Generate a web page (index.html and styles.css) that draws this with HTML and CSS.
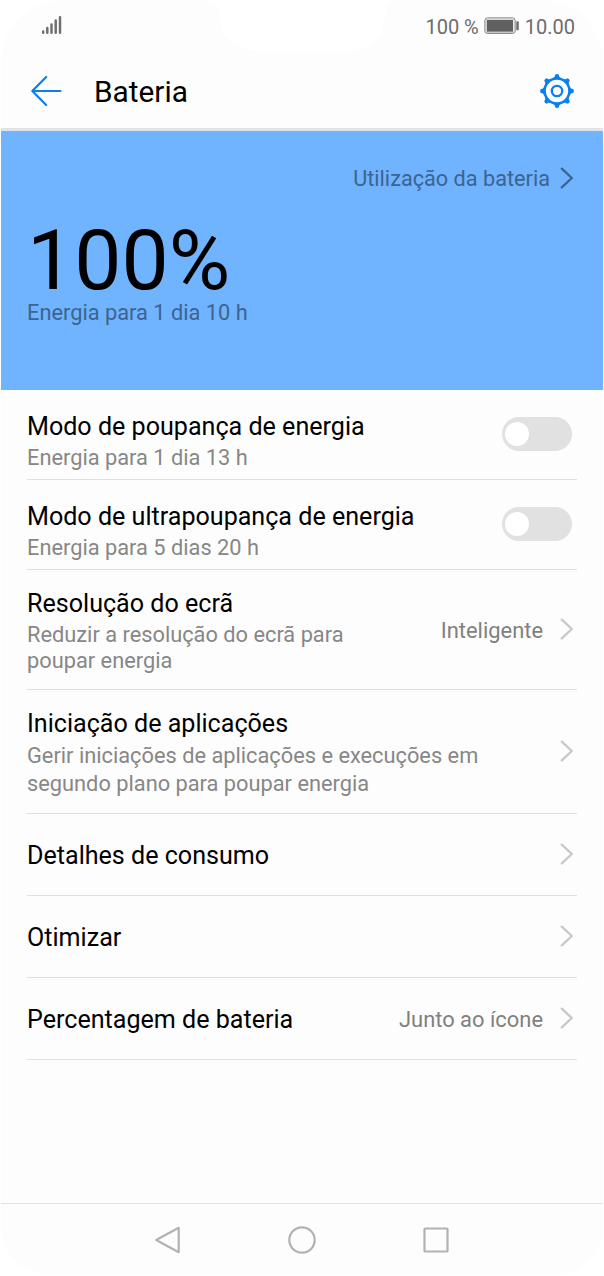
FILE: index.html
```html
<!DOCTYPE html>
<html lang="pt">
<head>
<meta charset="utf-8">
<title>Bateria</title>
<link rel="stylesheet" href="styles.css">
</head>
<body>
<svg class="defs" width="0" height="0" aria-hidden="true">
  <symbol id="chevron" viewBox="0 0 14 22"><path d="M1.800 1.600 11.800 11 1.800 20.400" fill="none" stroke="currentColor" stroke-width="2.300" stroke-linecap="round" stroke-linejoin="round"/></symbol>
</svg>
<div class="screen">
  <svg class="notch" width="200" height="52" viewBox="0 0 200 52"><path d="M0 0C13 1 16 6 17 15C18 36 32 50.500 54 50.500H146C168 50.500 182 36 183 15C184 6 187 1 200 0Z" fill="#fff"/></svg>
  <header class="status">
    <svg class="signal" width="22" height="20" viewBox="0 0 22 20"><path d="M2.200 16.600V17.700M6.300 13V17.700M10.500 9.500V17.700M14.700 5.600V17.700M19 2.200V17.700" stroke="#707070" stroke-width="2.500" stroke-linecap="round"/></svg>
    <div class="status-right">
      <span>100 %</span>
      <svg class="cell" width="36" height="18" viewBox="0 0 36 18"><rect x=".9" y=".9" width="30.200" height="15.600" rx="2.500" fill="#fff" stroke="#7a7a7a" stroke-width="1"/><rect x="1.800" y="1.800" width="28.400" height="13.800" rx="1.800" fill="none" stroke="#c8c8c8" stroke-width="1.200"/><rect x="2.800" y="2.900" width="26.200" height="11.800" fill="#606060"/><rect x="32.200" y="4.300" width="2.600" height="9" rx=".8" fill="#707070"/></svg>
      <span>10.00</span>
    </div>
  </header>
  <div class="appbar">
    <svg class="back" width="34" height="34" viewBox="0 0 34 34"><path d="M17.200 3 3.300 17 17.200 31M3.300 17H31.500" fill="none" stroke="#0b7ff0" stroke-width="2.200" stroke-linecap="round" stroke-linejoin="round"/></svg>
    <h1 class="heading">Bateria</h1>
    <svg class="gear" width="36" height="36" viewBox="-18 -18 36 36" fill="none" stroke="#0b7ff0">
      <circle r="12.400" stroke-width="2.500"/><circle r="5.200" stroke-width="2.300"/>
      <g stroke="none" fill="#0b7ff0">
        <path id="tooth" d="M-4.800-12-2.200-14.500-1.900-16.200Q0-17.700 1.900-16.200L2.200-14.500 4.800-12Z"/>
        <use href="#tooth" transform="rotate(45)"/><use href="#tooth" transform="rotate(90)"/><use href="#tooth" transform="rotate(135)"/><use href="#tooth" transform="rotate(180)"/><use href="#tooth" transform="rotate(225)"/><use href="#tooth" transform="rotate(270)"/><use href="#tooth" transform="rotate(315)"/>
      </g>
    </svg>
  </div>
  <section class="hero">
    <div class="usage"><span>Utilização da bateria</span><svg class="chevron"><use href="#chevron"/></svg></div>
    <div class="level">100%</div>
    <div class="remaining">Energia para 1 dia 10 h</div>
  </section>
  <main class="list">
    <div class="row mode">
      <div class="text"><div class="title">Modo de poupança de energia</div><div class="sub">Energia para 1 dia 13 h</div></div>
      <div class="toggle"><div class="knob"></div></div>
    </div>
    <div class="row mode">
      <div class="text"><div class="title">Modo de ultrapoupança de energia</div><div class="sub">Energia para 5 dias 20 h</div></div>
      <div class="toggle"><div class="knob"></div></div>
    </div>
    <div class="row resolution">
      <div class="text"><div class="title">Resolução do ecrã</div><div class="sub">Reduzir a resolução do ecrã para<br>poupar energia</div></div>
      <span class="value">Inteligente</span><svg class="chevron"><use href="#chevron"/></svg>
    </div>
    <div class="row launch">
      <div class="text"><div class="title">Iniciação de aplicações</div><div class="sub">Gerir iniciações de aplicações e execuções em<br>segundo plano para poupar energia</div></div>
      <svg class="chevron"><use href="#chevron"/></svg>
    </div>
    <div class="row single"><div class="title">Detalhes de consumo</div><svg class="chevron"><use href="#chevron"/></svg></div>
    <div class="row single"><div class="title">Otimizar</div><svg class="chevron"><use href="#chevron"/></svg></div>
    <div class="row single"><div class="title">Percentagem de bateria</div><span class="value">Junto ao ícone</span><svg class="chevron"><use href="#chevron"/></svg></div>
  </main>
  <nav class="navbar">
    <svg width="30" height="30" viewBox="0 0 30 30"><path d="M25.700 2.800V27.200L3.200 15Z"/></svg>
    <svg width="30" height="30" viewBox="0 0 30 30"><circle cx="15" cy="15" r="12.700"/></svg>
    <svg width="30" height="30" viewBox="0 0 30 30"><rect x="3.500" y="3.500" width="23" height="23" rx=".8"/></svg>
  </nav>
</div>
</body>
</html>
```

FILE: styles.css
```css
* { box-sizing: border-box; }
body { margin: 0; background: #fff; font-family: Roboto, "Liberation Sans", sans-serif; color: #000; }
svg { display: block; flex: none; }
.defs { position: absolute; }
.screen {
  position: relative; display: flex; flex-direction: column;
  width: 602px; height: 1275px; margin: 0 1px 1px;
  background: #fdfdfd; border-radius: 62px 62px 48px 48px; overflow: hidden;
}
.notch { position: absolute; top: 0; left: 201px; }
.status {
  height: 52px; padding: 0 28px 0 40px;
  display: flex; justify-content: space-between; align-items: center;
  font-size: 20px; color: #6c6c6c;
}
.signal { margin-bottom: 3px; }
.status-right { display: flex; align-items: center; padding-top: 1px; }
.cell { margin: 0 5px 2px 5px; }
.appbar {
  height: 79px; padding: 0 28px 0 28px; border-bottom: 3px solid #dfe3e7;
  display: flex; align-items: center;
}
.back, .gear { margin-top: 1px; }
.heading { flex: 1; margin: 0 0 0 31px; font-size: 29.800px; font-weight: 400; line-height: 36px; padding-top: 4px; }
.hero { height: 259px; padding: 32px 29px 0 26px; background: #70b3ff; }
.usage {
  display: flex; justify-content: flex-end; align-items: center; gap: 10px;
  height: 30px; font-size: 21.700px; color: #3c648f;
}
.level { margin: 30px 0 0; height: 76px; line-height: 76px; font-size: 84px; }
.remaining { font-size: 21.800px; line-height: 28px; color: #3c648f; }
.chevron { width: 14px; height: 22px; }
.list { margin: 0 26px; }
.row { display: flex; align-items: center; border-bottom: 1px solid #e0e0e0; color: #c8c8c8; padding-right: 3px; }
.row .chevron { margin-bottom: 1px; }
.text { flex: 1; align-self: flex-start; }
.title { color: #000; font-size: 25.100px; line-height: 32px; white-space: nowrap; }
.sub { font-size: 21.800px; line-height: 28px; color: #878787; white-space: nowrap; }
.mode { height: 90px; padding-right: 5px; }
.mode .text { padding-top: 21px; }
.mode .sub { margin-top: 1px; }
.toggle { width: 70px; height: 34px; margin-bottom: 1px; border-radius: 17px; background: #e1e1e1; padding: 5px 3px; }
.knob { width: 24px; height: 24px; border-radius: 50%; background: #fff; }
.resolution { height: 120px; }
.resolution .text { padding-top: 18px; }
.resolution .sub { line-height: 26px; margin-top: 2px; }
.launch { height: 124px; }
.launch .text { padding-top: 18px; }
.launch .sub { margin-top: 2px; }
.single { height: 82px; }
.single .title { flex: 1; padding-top: 3px; }
.value { font-size: 21.900px; color: #808080; margin-right: 17px; padding-top: 2px; }
.navbar {
  margin-top: auto; height: 72px; border-top: 1px solid #e2e2e2;
  display: flex; justify-content: center; align-items: center; gap: 104px;
}
.navbar svg { fill: none; stroke: #b2b2b2; stroke-width: 2.200; stroke-linejoin: round; }
```
